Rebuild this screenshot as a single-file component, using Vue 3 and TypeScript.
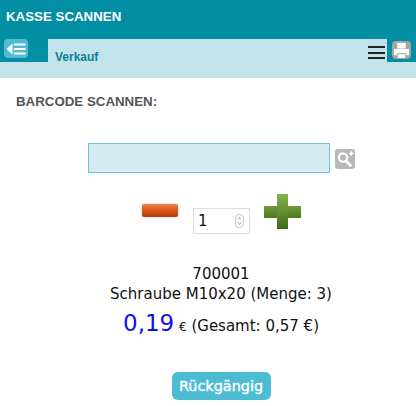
<script setup lang="ts">
import { ref } from 'vue'

const qty = ref(1)
</script>

<template>
  <div class="page">
    <header class="top">KASSE SCANNEN</header>
    <nav class="subnav">
      <div class="tab-left">
        <span class="back-btn">
          <svg viewBox="0 0 20 12" width="20" height="12">
            <path d="M0.500 6 6.500 0.500v11z" fill="#fff" />
            <path d="M8 1.500h11.500M8 6h11.500M8 10.500h11.500" stroke="#fff" stroke-width="2" />
          </svg>
        </span>
      </div>
      <div class="crumb">Verkauf</div>
      <div class="burger"><i></i><i></i><i></i></div>
      <div class="tab-right">
        <span class="print-btn">
          <svg viewBox="0 0 18 18" width="17" height="17">
            <path d="M4.500 1h9v6h-9z" fill="#fff" />
            <path d="M1 7.500h16v6.500h-3v-2H4v2H1z" fill="#fff" />
            <path d="M5 13h8v4H5z" fill="#fff" />
          </svg>
        </span>
      </div>
    </nav>
    <main class="content">
      <h1 class="title">BARCODE SCANNEN:</h1>
      <div class="scan-row">
        <input class="scan-input" type="text" />
        <span class="search-btn">
          <svg viewBox="0 0 20 20" width="20" height="20">
            <circle cx="8" cy="8.500" r="4.200" fill="none" stroke="#fff" stroke-width="2.200" />
            <path d="M11 12l4.600 4.400" stroke="#fff" stroke-width="2.800" stroke-linecap="round" />
            <path d="M14 4.500h4.500M16.200 2.200v4.500" stroke="#fff" stroke-width="1.500" />
          </svg>
        </span>
      </div>
      <div class="qty-row">
        <span class="minus"></span>
        <div class="qty-box">
          <span class="qty-val">{{ qty }}</span>
          <span class="spinner">
            <svg viewBox="0 0 7 12" width="7" height="12">
              <path d="M2 4.500 3.500 2.500 5 4.500M2 7.500 3.500 9.500 5 7.500" fill="none" stroke="#888" stroke-width="0.800" />
            </svg>
          </span>
        </div>
        <span class="plus"></span>
      </div>
      <div class="info">
        <div>700001</div>
        <div>Schraube M10x20 (Menge: 3)</div>
        <div class="price-line"><span class="price">0,19</span> <span class="euro">€</span> (Gesamt: 0,57 €)</div>
      </div>
      <div class="actions">
        <button class="undo" type="button">Rückgängig</button>
      </div>
    </main>
  </div>
</template>

<style scoped>
.page {
  width: 416px;
  height: 406px;
  overflow: hidden;
  background: #fff;
  font-family: "DejaVu Sans", Verdana, sans-serif;
  color: #111;
}

.top {
  height: 39px;
  box-sizing: border-box;
  background: #028ea3;
  color: #fff;
  font: bold 13.300px/33px "Liberation Sans", Arial, sans-serif;
  padding-left: 6px;
}

.subnav {
  height: 39px;
  display: flex;
  background: #c3e3ea;
  align-items: flex-start;
}

.tab-left {
  width: 48px;
  height: 23px;
  background: #028ea3;
  flex: none;
}

.back-btn {
  display: flex;
  width: 24px;
  height: 19px;
  margin: 0 0 0 4px;
  align-items: center;
  justify-content: center;
  background: #4fbcd3;
  border-radius: 4px;
}

.crumb {
  flex: 1;
  padding: 11px 0 0 7px;
  font: bold 12px/14px "Liberation Sans", Arial, sans-serif;
  color: #0b8095;
}

.burger {
  width: 17px;
  margin: 7px 2px 0 0;
  display: flex;
  flex-direction: column;
  gap: 3.500px;
}

.burger i {
  display: block;
  height: 2px;
  background: #222;
}

.tab-right {
  width: 29px;
  height: 23px;
  flex: none;
  background: #028ea3;
}

.print-btn {
  display: flex;
  width: 19px;
  height: 18px;
  margin: 2px 0 0 5px;
  align-items: center;
  justify-content: center;
  background: #a4a4a4;
  border-radius: 4px;
}

.content {
  padding: 17px 0 0;
}

.title {
  margin: 0 0 0 16px;
  font: bold 13.300px/14px "Liberation Sans", Arial, sans-serif;
  color: #555;
}

.scan-row {
  margin: 34px 0 0 88px;
  display: flex;
  align-items: flex-start;
}

.scan-input {
  width: 242px;
  height: 30px;
  box-sizing: border-box;
  background: #d4ecf2;
  border: 1px solid #6cc3d6;
  padding: 0;
}

.search-btn {
  display: flex;
  width: 20px;
  height: 20px;
  margin: 6px 0 0 5px;
  background: #b8b8b8;
  border-radius: 3px;
}

.qty-row {
  display: flex;
  margin: 20px 0 0 142px;
  align-items: flex-start;
}

.minus {
  width: 36px;
  height: 13px;
  margin-top: 11px;
  border-radius: 2px;
  background: linear-gradient(#f08050, #e05c20 40%, #b83a08);
  box-shadow: 0 0 1px #c85020;
}

.qty-box {
  width: 57px;
  height: 26px;
  box-sizing: border-box;
  margin: 15px 0 0 15px;
  border: 1px solid #ddd;
  display: flex;
  align-items: center;
  justify-content: space-between;
  padding: 0 5px 0 4px;
  font-size: 15px;
}

.spinner {
  display: flex;
  width: 7px;
  height: 12px;
  border: 1px solid #ccc;
  border-radius: 4px;
}

.plus {
  width: 37px;
  height: 35px;
  margin: 1px 0 0 14px;
  border-radius: 2px;
  background:
    linear-gradient(#86b34f, #3f6c12) 13px 0 / 11px 35px no-repeat,
    linear-gradient(#6f9c3c, #4a7a1c) 0 12px / 37px 12px no-repeat;
}

.info {
  margin: 30px 0 0 26px;
  text-align: center;
  font-size: 15px;
  line-height: 20px;
}

.price-line {
  margin-top: 4px;
  line-height: 31px;
}

.price {
  font-size: 23px;
  color: #0f10f0;
}

.euro {
  font-size: 12px;
}

.actions {
  margin: 29px 0 0 26px;
  text-align: center;
}

.undo {
  width: 99px;
  height: 28px;
  border: none;
  border-radius: 6px;
  background: #4bbcd1;
  color: #fff;
  padding: 0;
  font: 14.400px "DejaVu Sans", Verdana, sans-serif;
  -webkit-text-stroke: 0.4px #fff;
}
</style>
